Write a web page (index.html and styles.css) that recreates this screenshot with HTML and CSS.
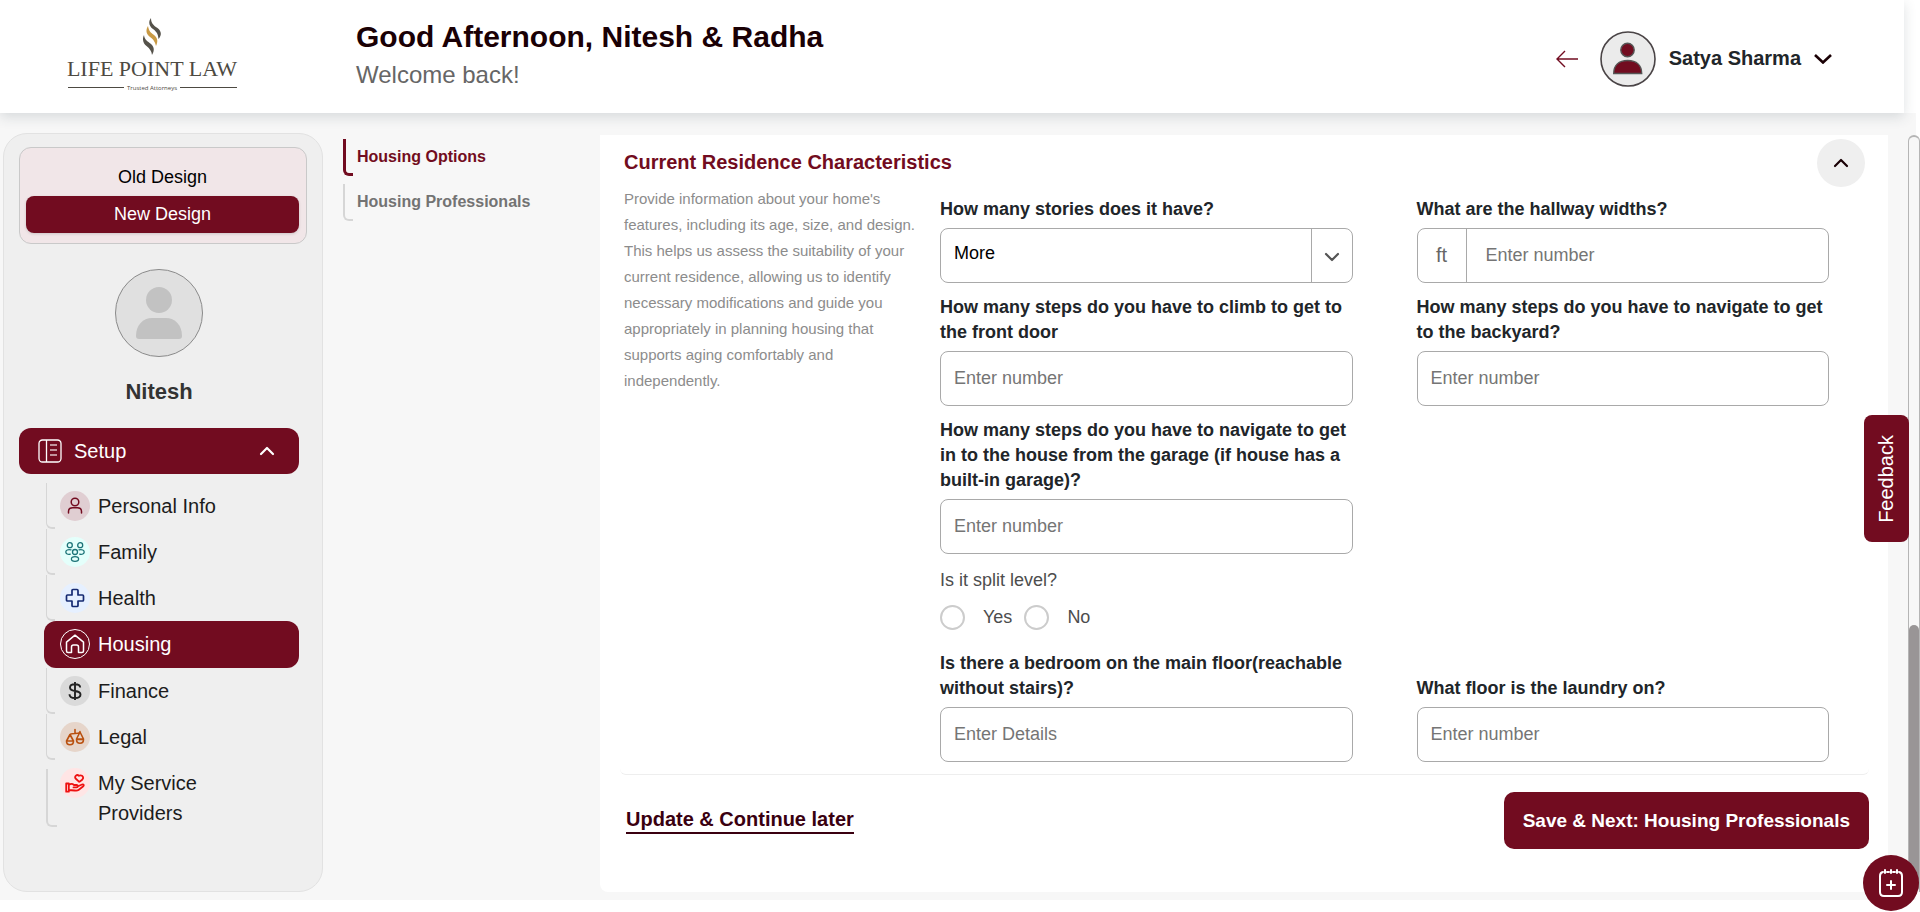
FILE: index.html
```html
<!DOCTYPE html>
<html lang="en">
<head>
<meta charset="utf-8">
<title>Life Point Law</title>
<link rel="stylesheet" href="styles.css">
</head>
<body>
<header class="topbar">
  <div class="logo">
    <svg class="logo-mark" viewBox="0 0 18 37" width="18" height="37" aria-hidden="true">
      <path fill="#55524a" d="M8 0c-3 4-2 8 2 11s5 5 5.500 10c3.500-4 3-8-1-11C10 7 8 5 8 0z"/>
      <path fill="#c99a45" d="M5 8c-2.500 4-2 8 2 11s5 5 6 9c2-4 2-8-2-11S6 13 5 8z"/>
      <path fill="#55524a" d="M1 17c-2 4-1 8 2.500 11s5 5 5.500 9c2.500-4 2.500-8-1-11S1.500 22 1 17z"/>
    </svg>
    <span class="logo-name">LIFE POINT LAW</span>
    <span class="logo-tag">Trusted Attorneys</span>
  </div>
  <div class="greeting">
    <h1>Good Afternoon, Nitesh &amp; Radha</h1>
    <p>Welcome back!</p>
  </div>
  <div class="account">
    <a class="back" href="#" aria-label="Back">
      <svg viewBox="0 0 22 18" width="22" height="18" fill="none" stroke="#720c20" stroke-width="1.4"><path d="M22 9H1M9 1 1 9l8 8"/></svg>
    </a>
    <button class="user" type="button">
      <svg viewBox="0 0 56 56" width="56" height="56" aria-hidden="true">
        <circle cx="28" cy="28" r="27" fill="#ebebeb" stroke="#4a4446" stroke-width="1.6"/>
        <circle cx="27.500" cy="19" r="6.700" fill="#720c20" stroke="#555" stroke-width="1.4"/>
        <path d="M13.700 42.500c0-8 5-13 14-13s14 5 14 13z" fill="#720c20" stroke="#555" stroke-width="1.400"/>
      </svg>
      <span>Satya Sharma</span>
      <svg viewBox="0 0 18 10" width="18" height="10" fill="none" stroke="#1a0005" stroke-width="2.6" aria-hidden="true"><path d="M1 1l8 7.500L17 1"/></svg>
    </button>
  </div>
</header>

<div class="workspace">
  <aside class="sidebar">
    <div class="design-switch">
      <button type="button">Old Design</button>
      <button type="button" class="on">New Design</button>
    </div>
    <svg class="portrait" viewBox="0 0 88 88" width="88" height="88" aria-hidden="true">
      <circle cx="44" cy="44" r="43.500" fill="#e0e0e0" stroke="#8a8a8a"/>
      <circle cx="44" cy="31" r="13" fill="#c2c2c2"/>
      <path d="M21 67c0-11 7-18 16-18h14c9 0 16 7 16 18 0 2-1 3-3 3H24c-2 0-3-1-3-3z" fill="#c2c2c2"/>
    </svg>
    <h2 class="person">Nitesh</h2>
    <nav>
      <button class="setup" type="button">
        <svg viewBox="0 0 24 24" width="24" height="24" fill="none" stroke="#fff" aria-hidden="true"><rect x="1" y="1" width="22" height="22" rx="3.500" stroke-width="1.300"/><path d="M8.500 1v22" stroke-width="1.300"/><path d="M12 6h7M12 11h7M12 16h7" stroke-width="1.500" opacity=".75"/></svg>
        <span>Setup</span>
        <svg viewBox="0 0 16 10" width="16" height="10" fill="none" stroke="#fff" stroke-width="2.200" stroke-linecap="round" stroke-linejoin="round" aria-hidden="true"><path d="M2 8l6-6 6 6"/></svg>
      </button>
      <ul class="menu">
        <li><a href="#"><span class="dot rose"><svg viewBox="0 0 20 20" fill="none" stroke="#720c20" stroke-width="1.500" stroke-linecap="round"><circle cx="10" cy="6" r="3.800"/><path d="M3.500 17v-1.500c0-2.500 1.500-3.800 4-3.800h5c2.500 0 4 1.300 4 3.800V17"/></svg></span>Personal Info</a></li>
        <li><a href="#"><span class="dot mint"><svg viewBox="0 0 20 20" fill="none" stroke="#1b7377" stroke-width="1.300" stroke-linecap="round"><circle cx="4.800" cy="3.200" r="2.500"/><circle cx="15.200" cy="3.200" r="2.500"/><circle cx="10" cy="10" r="2.500"/><ellipse cx="10" cy="17" rx="3.600" ry="2.300"/><path d="M6 7.900C3 7 .8 8.300.8 10s2 2.800 4.500 2.200M14 7.900c3-.9 5.200.4 5.200 2.100s-2 2.800-4.500 2.200"/></svg></span>Family</a></li>
        <li><a href="#"><span class="dot sky"><svg viewBox="0 0 20 20" fill="none" stroke="#152a72" stroke-width="1.700" stroke-linejoin="round"><path d="M8 1.500h4q1 0 1 1V7h4.500q1 0 1 1v4q0 1-1 1H13v4.500q0 1-1 1H8q-1 0-1-1V13H2.500q-1 0-1-1V8q0-1 1-1H7V2.500q0-1 1-1z"/></svg></span>Health</a></li>
        <li class="current"><a href="#" aria-current="page"><span class="dot ring"><svg viewBox="0 0 20 20" fill="none" stroke="#fff" stroke-width="1.500" stroke-linejoin="round"><path d="M1.500 8.200 10 1.200l8.500 7V17q0 1.500-1.500 1.500h-3.500V13q0-2-2-2h-3q-2 0-2 2v5.500H3q-1.500 0-1.500-1.500z"/></svg></span>Housing</a></li>
        <li><a href="#"><span class="dot grey"><svg viewBox="0 0 20 20" fill="none" stroke="#222" stroke-width="1.900"><path d="M10 1v18M15.200 6.500C15 4.200 13 3.200 10 3.200S5 4.500 5 6.500s1.500 3 5 3.500 5.500 1.300 5.500 3.500-2 3.500-5.500 3.500-5.500-1.500-5.500-3.800"/></svg></span>Finance</a></li>
        <li><a href="#"><span class="dot tan"><svg viewBox="0 0 20 20" fill="none" stroke="#b9500f" stroke-width="1.600" stroke-linecap="round" stroke-linejoin="round"><path d="M10 2.500v4M5 8c0-1.500 2-1.500 5-1.500S15 6 15 4.500M5 7.500 1.500 14h7zM15 5l-3.500 7h7zM1.500 14c0 5 7 5 7 0M11.500 12.500c0 5 7 5 7 0M1.500 14h7M11.500 12.500h7"/></svg></span>Legal</a></li>
        <li class="last"><a href="#"><span class="dot pink"><svg viewBox="0 0 20 20" fill="none" stroke="#ee1111" stroke-width="1.800" stroke-linecap="round" stroke-linejoin="round"><path d="M14.200 8.800 10.600 5.500C9.200 3.500 11.800.8 14 2.800c2-1.200 4.700.4 4 2.700-.4 1.400-2 2.200-3.800 3.300zM1.200 10.500h2.600v8.200H1.200zM3.800 12c2-1.500 3.500-1.500 5.200 0h2.600c1.600 0 1.600 2.400 0 2.400H8.500M12.500 13.500l4.500-2c1.800-.6 2.300 1 1 2l-4.500 3.500c-1 .8-2 .8-4 .5l-5.700-.500"/></svg></span>My Service Providers</a></li>
      </ul>
    </nav>
  </aside>

  <nav class="tabs">
    <a class="tab on" href="#">Housing Options</a>
    <a class="tab" href="#">Housing Professionals</a>
  </nav>

  <main class="panel">
    <form class="section">
      <div class="section-head">
        <h2>Current Residence Characteristics</h2>
        <button class="fold" type="button" aria-label="Collapse section">
          <svg viewBox="0 0 16 10" width="16" height="10" fill="none" stroke="#1a0005" stroke-width="2.200" stroke-linecap="round" stroke-linejoin="round"><path d="M2 8l6-6 6 6"/></svg>
        </button>
      </div>
      <div class="section-body">
        <p class="about">Provide information about your home's features, including its age, size, and design. This helps us assess the suitability of your current residence, allowing us to identify necessary modifications and guide you appropriately in planning housing that supports aging comfortably and independently.</p>
        <div class="fields">
          <div class="field">
            <label for="stories">How many stories does it have?</label>
            <div class="box">
              <select id="stories"><option>More</option></select>
              <span class="arrow"><svg viewBox="0 0 16 10" width="16" height="10" fill="none" stroke="#555" stroke-width="2.200" stroke-linecap="round" stroke-linejoin="round"><path d="M2 2l6 6 6-6"/></svg></span>
            </div>
          </div>
          <div class="field">
            <label for="hall">What are the hallway widths?</label>
            <div class="box"><span class="unit">ft</span><input class="after-unit" id="hall" type="text" placeholder="Enter number"></div>
          </div>
          <div class="field">
            <label for="front">How many steps do you have to climb to get to the front door</label>
            <div class="box"><input id="front" type="text" placeholder="Enter number"></div>
          </div>
          <div class="field">
            <label for="yard">How many steps do you have to navigate to get to the backyard?</label>
            <div class="box"><input id="yard" type="text" placeholder="Enter number"></div>
          </div>
          <div class="field first-col">
            <label for="garage">How many steps do you have to navigate to get in to the house from the garage (if house has a built-in garage)?</label>
            <div class="box"><input id="garage" type="text" placeholder="Enter number"></div>
          </div>
          <fieldset class="first-col split">
            <legend>Is it split level?</legend>
            <div class="choices">
              <label><input type="radio" name="split">Yes</label>
              <label><input type="radio" name="split">No</label>
            </div>
          </fieldset>
          <div class="field first-col">
            <label for="bedroom">Is there a bedroom on the main floor(reachable without stairs)?</label>
            <div class="box"><input id="bedroom" type="text" placeholder="Enter Details"></div>
          </div>
          <div class="field">
            <label for="laundry">What floor is the laundry on?</label>
            <div class="box"><input id="laundry" type="text" placeholder="Enter number"></div>
          </div>
        </div>
      </div>
    </form>
    <div class="actions">
      <a class="later" href="#">Update &amp; Continue later</a>
      <button class="save" type="button">Save &amp; Next: Housing Professionals</button>
    </div>
  </main>
  <div class="scroll-track"><div class="scroll-thumb"></div></div>
</div>

<button class="feedback" type="button">Feedback</button>
<button class="fab" type="button" aria-label="Add appointment">
  <svg viewBox="0 0 26 30" width="26" height="30" fill="none" stroke="#fff" stroke-width="2" stroke-linecap="round"><path d="M5 4Q2 4.500 2 8v16q0 4 4 4h14q4 0 4-4V8q0-3.500-3-4M9 4h2M15 4h2M7 2v3M13 2v3M19 2v3M9 17h8M13 13v8"/></svg>
</button>
</body>
</html>
```
FILE: styles.css
```css
*, *::before, *::after { box-sizing: border-box; }

body {
  margin: 0;
  background: #fff;
  color: #212529;
  font-family: "Liberation Sans", Arial, sans-serif;
  font-size: 18px;
}

h1, h2, p, ul { margin: 0; padding: 0; }
a { color: inherit; text-decoration: none; }
button, input, select { font: inherit; color: inherit; }
button { border: 0; padding: 0; background: none; cursor: pointer; }

/* Header */
.topbar {
  position: relative;
  z-index: 1;
  display: flex;
  align-items: center;
  height: 113px;
  margin-right: 16px;
  padding-right: 72px;
  background: #fff;
  box-shadow: 0 4px 12px rgba(50, 70, 80, .16);
}
.logo {
  display: flex;
  flex-direction: column;
  align-items: center;
  width: 304px;
  margin-right: 52px;
  padding-bottom: 3px;
  color: #4d4a42;
}
.logo-name { font: 22px/28px "Liberation Serif", serif; white-space: nowrap; }
.logo-tag {
  display: flex;
  align-items: center;
  gap: 3px;
  width: 169px;
  font: 6px/10px "Open Sans", sans-serif;
  white-space: nowrap;
}
.logo-tag::before, .logo-tag::after { content: ""; flex: 1; height: 1px; background: #4d4a42; }
.greeting { flex: 1; padding-bottom: 3px; }
.greeting h1 { color: #1a0005; font-size: 30px; line-height: 40px; }
.greeting p { color: #666; font-size: 24px; line-height: 36px; }
.account { display: flex; align-items: center; gap: 22px; padding-top: 4px; }
.back { display: flex; }
.user { display: flex; align-items: center; gap: 13px; font-size: 20px; font-weight: bold; }

/* Columns */
.workspace {
  display: flex;
  min-height: calc(100vh - 125px);
  margin-right: 4px;
  padding: 20px 0 8px 3px;
  background: #f7f7f7;
}

/* Sidebar */
.sidebar {
  flex: none;
  width: 320px;
  padding: 13px 15px;
  background: #efefef;
  border: 1px solid #e2e2e2;
  border-radius: 24px;
}
.design-switch {
  display: flex;
  flex-direction: column;
  padding: 11px 7px 10px 6px;
  background: #f1e6e8;
  border: 1px solid #c9c9c9;
  border-radius: 12px;
}
.design-switch button { height: 37px; border-radius: 8px; color: #000; }
.design-switch .on { background: #720c20; color: #fff; box-shadow: 0 1px 3px rgba(0, 0, 0, .15); }
.portrait { display: block; margin: 25px auto 20px 96px; }
.person { margin-right: 8px; color: #333; font-size: 22px; line-height: 30px; text-align: center; }
.sidebar nav { margin: 21px 8px 0 0; }
.setup {
  display: flex;
  align-items: center;
  gap: 12px;
  width: 100%;
  height: 46px;
  padding: 0 24px 0 19px;
  background: #720c20;
  border-radius: 12px;
  color: #fff;
  font-size: 20px;
}
.setup span { flex: 1; text-align: left; }
.menu { margin-top: 9px; padding-left: 25px; list-style: none; }
.menu a {
  position: relative;
  display: flex;
  gap: 8px;
  min-height: 46px;
  padding: 8px 60px 8px 16px;
  color: #1c1c1c;
  font-size: 20px;
  line-height: 30px;
}
.menu a::before {
  content: "";
  position: absolute;
  inset: 0 auto 0 2px;
  width: 9px;
  border: solid #d6d6d6;
  border-width: 0 0 2px 1px;
  border-radius: 0 0 0 6px;
}
.menu .current a { min-height: 47px; background: #720c20; border-radius: 12px; color: #fff; }
.menu .current a::before { display: none; }
.menu .last a::before { top: 9px; bottom: 9px; width: 11px; border-left-width: 2px; }
.dot {
  display: grid;
  flex: none;
  place-items: center;
  width: 30px;
  height: 30px;
  border-radius: 50%;
}
.dot svg { width: 20px; height: 20px; }
.rose { background: #e0ced2; }
.mint { background: #e4fffb; }
.sky { background: #e6f0ff; }
.ring { border: 1px solid #fff; }
.grey { background: #dadada; }
.tan { background: #e6d5ca; }
.pink { background: #ffe5e5; }

/* Section tabs */
.tabs { flex: none; width: 277px; padding: 6px 0 0 20px; }
.tab {
  position: relative;
  display: block;
  height: 37px;
  margin-bottom: 8px;
  padding-left: 14px;
  color: #737373;
  font-size: 16px;
  font-weight: bold;
  line-height: 35px;
}
.tab::before {
  content: "";
  position: absolute;
  inset: 0 auto 0 0;
  width: 10px;
  border: solid #d6d6d6;
  border-width: 0 0 2px 2px;
  border-radius: 0 0 0 6px;
}
.tab.on { color: #720c20; }
.tab.on::before { border-color: #720c20; border-width: 0 0 3px 3px; }

/* Main panel */
.panel {
  flex: 1;
  min-width: 0;
  margin: 2px 20px 0 0;
  padding: 4px 19px 0 20px;
  background: #fff;
  border-radius: 0 0 8px 8px;
}
.section { padding: 0 4px 12px; border-bottom: 1px solid #eee; border-radius: 6px; }
.section-head { display: flex; justify-content: space-between; height: 48px; }
.section-head h2 { color: #720c20; font-size: 20px; line-height: 46px; }
.fold { display: grid; place-items: center; width: 48px; height: 48px; background: #efefef; border-radius: 50%; }
.section-body { display: grid; grid-template-columns: 292px 1fr; gap: 24px; padding-right: 36px; }
.about { margin-top: -1px; color: #8c8c8c; font-size: 15px; line-height: 26px; }
.fields { display: grid; grid-template-columns: 1fr 1fr; gap: 12px 64px; padding-top: 10px; }
.field { display: flex; flex-direction: column; justify-content: flex-end; gap: 6px; }
.field label { font-weight: bold; line-height: 25px; }
.first-col { grid-column: 1; }
.box {
  display: flex;
  align-items: stretch;
  height: 55px;
  border: 1px solid #a9a9a9;
  border-radius: 8px;
  overflow: hidden;
}
.box input, .box select {
  flex: 1;
  min-width: 0;
  padding: 0 13px;
  border: 0;
  outline: 0;
  background: none;
}
.box select { padding-bottom: 5px; color: #000; appearance: none; }
.box input::placeholder { color: #757575; }
.box .after-unit { padding-left: 19px; }
.unit { display: grid; place-items: center; width: 49px; border-right: 1px solid #a9a9a9; color: #666; font-size: 20px; }
.arrow { display: grid; place-items: center; width: 41px; padding-top: 2px; border-left: 1px solid #a9a9a9; }
.split { margin: 0; padding: 0 0 9px; border: 0; color: #4d4d4d; }
.split legend { padding: 0; line-height: 28px; }
.choices { display: flex; gap: 12px; padding-top: 11px; }
.choices label { display: flex; align-items: center; gap: 18px; }
.choices input {
  width: 25px;
  height: 25px;
  margin: 0;
  appearance: none;
  border: 2px solid #ccc;
  border-radius: 50%;
}
.actions { display: flex; align-items: center; justify-content: space-between; padding: 17px 0 43px 6px; }
.later { padding-bottom: 1px; border-bottom: 2px solid #3a0010; color: #3a0010; font-size: 20px; font-weight: bold; line-height: 24px; }
.save { height: 57px; padding: 0 19px; background: #720c20; border-radius: 10px; color: #fff; font-size: 19px; font-weight: bold; }

/* Scroll indicator */
.scroll-track {
  flex: none;
  width: 12px;
  margin: 2px -4px 0 0;
  padding-top: 488px;
  background: #f7f7f7;
  border: 2px solid #b5b5b5;
  border-width: 2px 1px 0;
  border-radius: 6px 6px 0 0;
}
.scroll-thumb { height: 100%; background: #999596; border-radius: 6px; }

/* Floating controls */
.feedback {
  position: fixed;
  top: 415px;
  right: 11px;
  z-index: 2;
  width: 45px;
  height: 127px;
  background: #720c20;
  border-radius: 8px;
  color: #fff;
  font-size: 20px;
  writing-mode: sideways-lr;
}
.fab {
  position: fixed;
  right: 1px;
  bottom: 1px;
  z-index: 2;
  display: grid;
  place-items: center;
  width: 56px;
  height: 56px;
  background: #720c20;
  border-radius: 50%;
}
```
